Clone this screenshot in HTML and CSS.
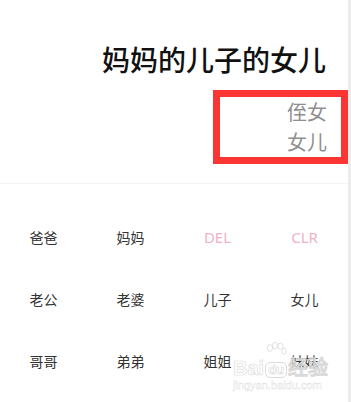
FILE: index.html
```html
<!DOCTYPE html>
<html lang="zh-CN">
<head>
    <meta charset="UTF-8">
    <meta name="viewport" content="width=device-width, initial-scale=1.0">
    <title>亲戚计算器</title>
    <link rel="stylesheet" href="styles.css">
</head>
<body>
    <div class="page">
        <div class="screen">
            <div class="display">
                <div class="question">妈妈的儿子的女儿</div>
                <div class="answer">
                    <div>侄女</div>
                    <div>女儿</div>
                </div>
            </div>

            <div class="keypad">
                <button class="key">爸爸</button>
                <button class="key">妈妈</button>
                <button class="key action">DEL</button>
                <button class="key action">CLR</button>
                <button class="key">老公</button>
                <button class="key">老婆</button>
                <button class="key">儿子</button>
                <button class="key">女儿</button>
                <button class="key">哥哥</button>
                <button class="key">弟弟</button>
                <button class="key">姐姐</button>
                <button class="key">妹妹</button>
            </div>

            <div class="watermark">
                <div class="wm-logo">
                    <span>Bai</span>
                    <span class="wm-du">
                        <svg class="paw" width="22" height="20" viewBox="0 0 22 20">
                            <ellipse cx="5" cy="6" rx="2.6" ry="3.4"/>
                            <ellipse cx="10" cy="3.6" rx="2.6" ry="3.2"/>
                            <ellipse cx="15.5" cy="4.2" rx="2.6" ry="3.2"/>
                            <ellipse cx="19" cy="9" rx="2.2" ry="3"/>
                        </svg>
                        <span class="du">du</span>
                    </span>
                    <span>经验</span>
                </div>
                <div class="wm-url">jingyan.baidu.com</div>
            </div>
        </div>
        <div class="edge"></div>
    </div>
</body>
</html>
```

FILE: styles.css
```css
body {
    margin: 0;
    background-color: #ffffff;
    font-family: "Noto Sans", "Noto Sans CJK SC", sans-serif;
    color: #333;
}
.page {
    display: flex;
    height: 402px;
}
.screen {
    flex: 1;
    position: relative;
}
.edge {
    width: 3px;
    background-color: #ececec;
}
.display {
    display: flex;
    flex-direction: column;
    align-items: flex-end;
    padding-top: 41px;
    border-bottom: 1px solid #f4f4f4;
    height: 142px;
}
.question {
    font-family: "Noto Sans CJK SC", sans-serif;
    font-size: 28px;
    line-height: 36px;
    font-weight: 500;
    color: #111;
    padding-right: 22px;
}
.answer {
    margin-top: 13px;
    width: 107px;
    border: 7px solid #fb3434;
    padding: 0 14px 0 0;
    text-align: right;
    font-family: "Noto Sans CJK SC", sans-serif;
    font-size: 20px;
    line-height: 30px;
    color: #8f8f8f;
}
.keypad {
    display: grid;
    grid-template-columns: repeat(4, 1fr);
    grid-auto-rows: 62px;
    padding-top: 22px;
}
.key {
    border: none;
    background: none;
    padding: 0;
    font-family: "Noto Sans CJK SC", sans-serif;
    font-size: 14px;
    color: #333;
}
.key.action {
    font-family: "Noto Sans", sans-serif;
    color: #f0b2c5;
    font-size: 15px;
}
.watermark {
    position: absolute;
    left: 233px;
    top: 345px;
    color: #fff;
    -webkit-text-stroke: 0.6px #d6d6d6;
    opacity: 0.9;
}
.wm-logo {
    display: flex;
    align-items: flex-end;
    font-family: "Liberation Sans", sans-serif;
    font-weight: 700;
    font-size: 20px;
    line-height: 20px;
    height: 33px;
}
.wm-du {
    display: flex;
    flex-direction: column;
    align-items: center;
    margin: 0 1px;
}
.paw {
    fill: #fff;
    stroke: #d6d6d6;
    stroke-width: 0.8;
}
.du {
    font-size: 13px;
    line-height: 14px;
    border: 1px solid #d6d6d6;
    border-radius: 5px;
    padding: 0 2px;
}
.wm-url {
    font-family: "Liberation Sans", sans-serif;
    font-size: 11px;
    line-height: 14px;
    -webkit-text-stroke: 0.4px #dcdcdc;
}
```
